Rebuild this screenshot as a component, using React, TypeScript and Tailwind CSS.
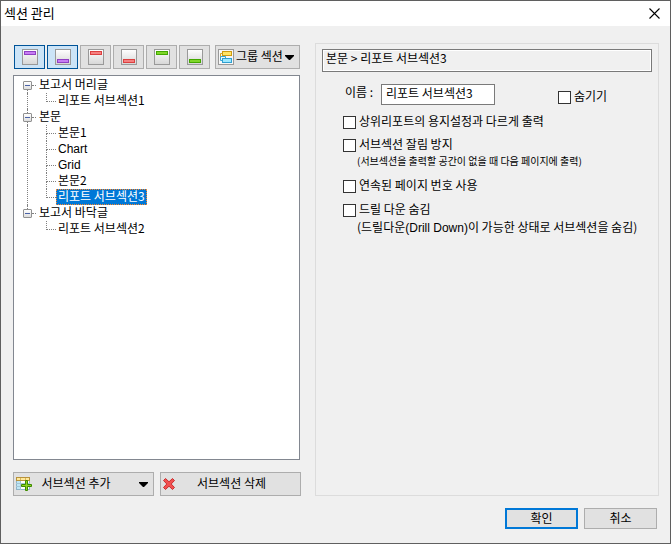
import React, { useState } from "react";

const buttonBase =
  "flex items-center border border-[#adadad] bg-[#e1e1e1] hover:border-[#0078d7]";

type Band = { label: string; position: "top" | "bottom"; fill: string; stroke: string; active?: boolean };

const bands: Band[] = [
  { label: "보고서 머리글", position: "top", fill: "#c77df3", stroke: "#8f3fc4", active: true },
  { label: "보고서 바닥글", position: "bottom", fill: "#c77df3", stroke: "#8f3fc4", active: true },
  { label: "페이지 머리글", position: "top", fill: "#f58080", stroke: "#dc4040" },
  { label: "페이지 바닥글", position: "bottom", fill: "#f58080", stroke: "#dc4040" },
  { label: "그룹 머리글", position: "top", fill: "#7fd62a", stroke: "#43a800" },
  { label: "그룹 바닥글", position: "bottom", fill: "#7fd62a", stroke: "#43a800" },
];

function BandIcon({ position, fill, stroke }: Band) {
  const y = position === "top" ? 2.5 : 10.5;
  return (
    <svg width="16" height="16" viewBox="0 0 16 16" aria-hidden="true">
      <defs>
        <linearGradient id="paper" x1="0" y1="0" x2="0" y2="1">
          <stop offset="0" stopColor="#ffffff" />
          <stop offset="1" stopColor="#d6d6d6" />
        </linearGradient>
      </defs>
      <rect x="0.5" y="0.5" width="15" height="15" fill="url(#paper)" stroke="#999999" />
      <rect x="2.5" y={y} width="11" height="3" fill={fill} stroke={stroke} />
    </svg>
  );
}

function GroupIcon() {
  return (
    <svg width="16" height="16" viewBox="0 0 16 16" aria-hidden="true" className="shrink-0">
      <rect x="0.5" y="0.5" width="15" height="15" fill="#f7f7f7" stroke="#999999" />
      <path d="M4 4.5H2.5V8" fill="none" stroke="#d9a520" />
      <path d="M2.5 8V11.5H4" fill="none" stroke="#33a5d6" />
      <path d="M2.5 7.5H7.5V9" fill="none" stroke="#33a5d6" />
      <rect x="4.5" y="2.5" width="9" height="4" fill="#ffe566" stroke="#cf9a10" />
      <rect x="4.5" y="9.5" width="9" height="4" fill="#9be8ff" stroke="#2f9fd0" />
    </svg>
  );
}

function AddIcon() {
  return (
    <svg width="17" height="15" viewBox="0 0 17 15" aria-hidden="true" className="shrink-0">
      <rect x="0.5" y="0.5" width="13" height="12" fill="#ffffff" stroke="#8fb4c8" />
      <rect x="1" y="4" width="4" height="8" fill="#bfe6f5" />
      <path d="M0 6.5H14M0 9.5H14M4.5 4V13M9.5 4V13" stroke="#a3c6d6" />
      <rect x="0.5" y="0.5" width="13" height="3" fill="#ffe99a" stroke="#b8923c" />
      <path d="M4.5 1V3M9.5 1V3" stroke="#d9b55c" />
      <path
        d="M9.5 3.5H11.5V7.5H15.5V9.5H11.5V13.5H9.5V9.5H5.5V7.5H9.5Z"
        fill="#8ed321"
        stroke="#3c8a00"
      />
    </svg>
  );
}

function DeleteIcon() {
  return (
    <svg width="12" height="12" viewBox="0 0 12 12" aria-hidden="true" className="shrink-0">
      <path
        d="M2.5 0.5L6 3.8L9.5 0.5L11.5 2.5L8.2 6L11.5 9.5L9.5 11.5L6 8.2L2.5 11.5L0.5 9.5L3.8 6L0.5 2.5Z"
        fill="#f25050"
        stroke="#c92f2f"
      />
    </svg>
  );
}

function Caret() {
  return (
    <svg width="9" height="5" viewBox="0 0 9 5" aria-hidden="true" className="shrink-0">
      <path d="M0 0H9V1L5 5H4L0 1Z" fill="#000000" />
    </svg>
  );
}

const latin = "font-['Liberation_Sans',sans-serif]";

type Section = { name: string; children: string[] };

const sections: Section[] = [
  { name: "보고서 머리글", children: ["리포트 서브섹션1"] },
  { name: "본문", children: ["본문1", "Chart", "Grid", "본문2", "리포트 서브섹션3"] },
  { name: "보고서 바닥글", children: ["리포트 서브섹션2"] },
];

const dots = "border-dotted border-[#808080]";

function SectionTree({ selected, onSelect }: { selected: string; onSelect: (name: string) => void }) {
  return (
    <ul className="pt-px pl-[9px]">
      {sections.map((section, i) => {
        const first = i === 0;
        const last = i === sections.length - 1;
        return (
          <li key={section.name}>
            <div className="flex h-4">
              <span className="flex w-[9px] flex-col">
                <span className={`ml-1 h-1 ${first ? "" : `border-l ${dots}`}`} />
                <button
                  type="button"
                  aria-label={`${section.name} 접기`}
                  className="flex h-[9px] w-[9px] items-center justify-center rounded-[1px] border border-[#919191] bg-linear-to-b from-white to-[#dedede]"
                >
                  <span className="h-px w-[5px] bg-[#4b63a7]" />
                </button>
                <span className={`ml-1 h-[3px] ${last ? "" : `border-l ${dots}`}`} />
              </span>
              <span className={`h-[9px] w-1 border-b ${dots}`} />
              <span className="pl-[3px] leading-[14px]">{section.name}</span>
            </div>
            <ul className={`ml-1 border-l pl-[18px] ${last ? "border-transparent" : dots}`}>
              {section.children.map((child, j) => (
                <li key={child} className="flex h-4">
                  <span className="flex w-[10px] flex-col">
                    <span className={`h-[9px] border-b border-l ${dots}`} />
                    <span
                      className={`h-[7px] ${j < section.children.length - 1 ? `border-l ${dots}` : ""}`}
                    />
                  </span>
                  <button
                    type="button"
                    onClick={() => onSelect(child)}
                    className={`h-4 border px-px pb-[2px] leading-3 whitespace-nowrap ${
                      child === selected
                        ? "border-dotted border-[#ff8728] bg-[#0078d7] text-white"
                        : "border-transparent"
                    }`}
                  >
                    {/^[A-Za-z ]+$/.test(child) ? <span className={latin}>{child}</span> : child}
                  </button>
                </li>
              ))}
            </ul>
          </li>
        );
      })}
    </ul>
  );
}

function Check({ label, note, small }: { label: string; note?: React.ReactNode; small?: boolean }) {
  return (
    <div>
      <label className="flex h-[14px] items-center gap-[3px]">
        <input
          type="checkbox"
          className="h-[13px] w-[13px] shrink-0 appearance-none border border-[#333333] bg-white checked:bg-[#0078d7]"
        />
        <span className="pb-[2px] leading-3">{label}</span>
      </label>
      {note && (
        <p className={`pl-[14px] ${small ? "pt-px text-[10px] leading-4" : "pt-[2px] leading-4"}`}>{note}</p>
      )}
    </div>
  );
}

export default function App() {
  const [selected, setSelected] = useState("리포트 서브섹션3");
  return (
    <div className="flex min-h-screen flex-col border border-[#5f5f5f] bg-[#f0f0f0] font-['Noto_Sans_CJK_KR',sans-serif] text-[12px] text-black">
      <header className="flex h-[25px] items-center justify-between bg-white pr-[10px] pl-[3px]">
        <h1 className="pb-[2px] text-[13px] leading-4">섹션 관리</h1>
        <button type="button" aria-label="닫기">
          <svg width="11" height="11" viewBox="0 0 11 11" aria-hidden="true">
            <path d="M0.5 0.5L10.5 10.5M10.5 0.5L0.5 10.5" stroke="#000000" strokeWidth="1.1" />
          </svg>
        </button>
      </header>

      <main className="flex grow gap-[14px] pt-4 pr-[11px] pl-3">
        <section className="flex w-[288px] shrink-0 flex-col">
          <div className="flex gap-[2px] pt-[3px] pl-px">
            {bands.map((band) => (
              <button
                key={band.label}
                type="button"
                aria-label={band.label}
                className={`flex h-6 w-[31px] items-center justify-center border ${
                  band.active ? "border-[#005499] bg-[#cce4f7]" : "border-[#adadad] bg-[#e1e1e1]"
                }`}
              >
                <BandIcon {...band} />
              </button>
            ))}
            <button type="button" className={`${buttonBase} mr-px ml-[3px] h-6 grow gap-[2px] pl-[2px]`}>
              <GroupIcon />
              <span className="pb-[2px] leading-4 whitespace-nowrap">그룹 섹션</span>
              <Caret />
            </button>
          </div>
          <div className="mt-[6px] mr-px grow border border-[#828790] bg-white">
            <SectionTree selected={selected} onSelect={setSelected} />
          </div>
          <div className="mt-3 grid grid-cols-2 gap-[6px]">
            <button type="button" className={`${buttonBase} h-6 pr-[5px] pl-[2px]`}>
              <AddIcon />
              <span className="grow pr-5 pb-[2px] text-center leading-4">서브섹션 추가</span>
              <Caret />
            </button>
            <button type="button" className={`${buttonBase} h-6 pl-[2px]`}>
              <DeleteIcon />
              <span className="grow pr-3 pb-[2px] text-center leading-4">서브섹션 삭제</span>
            </button>
          </div>
        </section>

        <section className="mt-px grow border border-[#dcdcdc] px-[6px] pt-[5px]">
          <div className="h-[23px] border border-[#7a7a7a] px-[3px] leading-[15px] shadow-[inset_0_0_0_1px_#ffffff]">
            본문 &gt; {selected}
          </div>
          <div className="mt-3 flex items-start pr-[45px] pl-[23px]">
            <label htmlFor="section-name" className="w-9 leading-[15px] whitespace-nowrap">
              이름 :
            </label>
            <input
              id="section-name"
              type="text"
              defaultValue="리포트 서브섹션3"
              className="h-[21px] w-[114px] border border-[#7a7a7a] bg-white px-1 pb-[5px] outline-none"
            />
            <div className="ml-auto pt-[6px]">
              <Check label="숨기기" />
            </div>
          </div>
          <div className="flex flex-col pt-[10px] pl-[21px]">
            <Check label="상위리포트의 용지설정과 다르게 출력" />
            <div className="pt-[9px]">
              <Check
                label="서브섹션 잘림 방지"
                note="(서브섹션을 출력할 공간이 없을 때 다음 페이지에 출력)"
                small
              />
            </div>
            <div className="pt-[10px]">
              <Check label="연속된 페이지 번호 사용" />
            </div>
            <div className="pt-[10px]">
              <Check
                label="드릴 다운 숨김"
                note={
                  <>
                    (드릴다운<span className={latin}>(Drill Down)</span>이 가능한 상태로 서브섹션을 숨김)
                  </>
                }
              />
            </div>
          </div>
        </section>
      </main>

      <footer className="flex justify-end gap-[6px] pt-3 pr-[13px] pb-[14px] pl-3">
        <button type="button" className="h-[21px] w-[73px] border-2 border-[#0078d7] bg-[#e1e1e1] pb-[2px] leading-[15px]">
          확인
        </button>
        <button type="button" className="h-[21px] w-[73px] border border-[#adadad] bg-[#e1e1e1] pb-[2px] leading-[17px]">
          취소
        </button>
      </footer>
    </div>
  );
}
